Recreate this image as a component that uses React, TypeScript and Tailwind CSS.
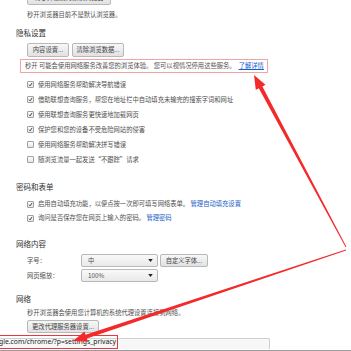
import React from "react";

const font = "font-['Noto_Sans_CJK_SC','Noto_Sans',sans-serif]";

function Btn({ children, className = "" }: { children: React.ReactNode; className?: string }) {
  return (
    <div
      className={`flex items-center justify-center whitespace-nowrap rounded-[2px] border border-[#b8b8b8] bg-linear-to-b from-[#f7f7f7] to-[#e2e2e2] px-[6px] text-[6.3px] text-[#444] ${className}`}
    >
      {children}
    </div>
  );
}

function Check({ checked }: { checked?: boolean }) {
  return (
    <span className="flex h-[7px] w-[7px] shrink-0 items-center justify-center rounded-[1px] border border-[#a0a0a0] bg-linear-to-b from-[#fdfdfd] to-[#e6e6e6]">
      {checked ? (
        <svg viewBox="0 0 8 8" className="h-[7px] w-[7px]" aria-hidden>
          <path d="M1.6 4.3 L3.3 6.1 L6.6 1.4" stroke="#2b2b2b" strokeWidth="1.4" fill="none" />
        </svg>
      ) : null}
    </span>
  );
}

function Row({ checked, h = "h-[15px]", children }: { checked?: boolean; h?: string; children: React.ReactNode }) {
  return (
    <div className={`flex ${h} items-center gap-[4px] whitespace-nowrap`}>
      <Check checked={checked} />
      <span>{children}</span>
    </div>
  );
}

function Heading({ children, className = "" }: { children: React.ReactNode; className?: string }) {
  return (
    <div className={`-ml-[11px] flex h-[10px] items-center text-[7.5px] text-[#303030] ${className}`}>{children}</div>
  );
}

function Select({ value }: { value: string }) {
  return (
    <div className="flex h-[13px] w-[77px] items-center justify-between rounded-[2px] border border-[#b8b8b8] bg-linear-to-b from-[#f9f9f9] to-[#e9e9e9] pl-[6px] pr-[4px]">
      <span>{value}</span>
      <svg viewBox="0 0 6 4" className="h-[3px] w-[5px]" aria-hidden>
        <path d="M0 0 L6 0 L3 4 Z" fill="#222" />
      </svg>
    </div>
  );
}

type P = [number, number];
// tapered annotation arrow: thin at the tail, thick shaft and barbed head at the tip
function arrow(tip: P, tail: P, head = 14, half = 5.5, shaft = 2) {
  const dx = tip[0] - tail[0];
  const dy = tip[1] - tail[1];
  const len = Math.hypot(dx, dy);
  const ux = dx / len;
  const uy = dy / len;
  const nx = uy;
  const ny = -ux;
  const bx = tip[0] - head * ux;
  const by = tip[1] - head * uy;
  const pts: P[] = [
    [tail[0] + 0.4 * nx, tail[1] + 0.4 * ny],
    [bx + shaft * nx, by + shaft * ny],
    [bx + half * nx, by + half * ny],
    tip,
    [bx - half * nx, by - half * ny],
    [bx - shaft * nx, by - shaft * ny],
    [tail[0] - 0.4 * nx, tail[1] - 0.4 * ny],
  ];
  return pts.map((p) => `${p[0].toFixed(1)},${p[1].toFixed(1)}`).join(" ");
}

export default function App() {
  return (
    <div className={`relative h-[351px] w-[351px] overflow-hidden bg-white ${font} text-[6.3px] text-[#4f4f4f]`}>
      <div className="flex flex-col pl-[27px]">
        <Btn className="-mt-[9px] h-[14px] w-[84px]">将秒开设置为默认浏览器</Btn>
        <div className="mt-[5px] flex h-[10px] items-center">秒开浏览器目前不是默认浏览器。</div>

        <Heading className="mt-[8px]">隐私设置</Heading>
        <div className="mt-[5px] flex gap-[3px]">
          <Btn className="h-[14px] w-[42px]">内容设置...</Btn>
          <Btn className="h-[14px] w-[52px]">清除浏览数据...</Btn>
        </div>
        <div className="-ml-[7px] mt-[2px] flex h-[14px] w-[248px] items-center whitespace-nowrap border border-[#f2a4a4] pl-[4px]">
          <span>秒开 可能会使用网络服务改善您的浏览体验。 您可以视情况停用这些服务。</span>
          <span className="ml-[3px] text-[#1a5cc8] underline">了解详情</span>
        </div>
        <div className="mt-[4px] flex flex-col">
          <Row checked>使用网络服务帮助解决导航错误</Row>
          <Row checked>借助联想查询服务，帮您在地址栏中自动填充未输完的搜索字词和网址</Row>
          <Row checked>使用联想查询服务更快速地加载网页</Row>
          <Row checked>保护您和您的设备不受危险网站的侵害</Row>
          <Row>使用网络服务帮助解决拼写错误</Row>
          <Row>随浏览流量一起发送“不跟踪”请求</Row>
        </div>

        <Heading className="mt-[15px]">密码和表单</Heading>
        <div className="mt-[5px] flex flex-col">
          <Row checked h="h-[14px]">
            启用自动填充功能，以便点按一次即可填写网络表单。 <span className="text-[#1a5cc8]">管理自动填充设置</span>
          </Row>
          <Row checked h="h-[14px]">
            询问是否保存您在网页上输入的密码。 <span className="text-[#1a5cc8]">管理密码</span>
          </Row>
        </div>

        <Heading className="mt-[14px]">网络内容</Heading>
        <div className="mt-[5px] flex items-center">
          <span className="w-[54px]">字号：</span>
          <Select value="中" />
          <Btn className="ml-[2px] h-[13px] w-[48px]">自定义字体...</Btn>
        </div>
        <div className="mt-[2px] flex items-center">
          <span className="w-[54px]">网页缩放：</span>
          <Select value="100%" />
        </div>

        <Heading className="mt-[12px]">网络</Heading>
        <div className="mt-[4px] flex h-[10px] items-center">秒开浏览器会使用您计算机的系统代理设置连接到网络。</div>
        <Btn className="mt-[2px] h-[13px] w-[72px]">更改代理服务器设置...</Btn>
      </div>

      <div className="absolute bottom-0 left-0 w-full">
        <div className="relative h-[14px]">
          <div className="absolute bottom-[1px] left-0 h-[11px] w-[270px] rounded-tr-[2px] border-r border-t border-[#cfcfcf] bg-[#f7f7f7]" />
          <div className="absolute bottom-[1px] left-0 flex h-[14px] w-[118px] items-center border border-l-0 border-[#e8383d] font-['Noto_Sans',sans-serif] text-[6.8px] text-[#222]">
            <span className="-ml-[1px]">gle.com/chrome/?p=settings_privacy</span>
          </div>
        </div>
        <div className="h-[1px] bg-[#9c9c9c]" />
      </div>

      <svg className="pointer-events-none absolute inset-0" width="351" height="351" viewBox="0 0 351 351" aria-hidden>
        <polygon points={arrow([254, 75], [346, 247])} fill="#f42a2a" />
        <polygon points={arrow([73, 341], [346, 250])} fill="#f42a2a" />
      </svg>
    </div>
  );
}
